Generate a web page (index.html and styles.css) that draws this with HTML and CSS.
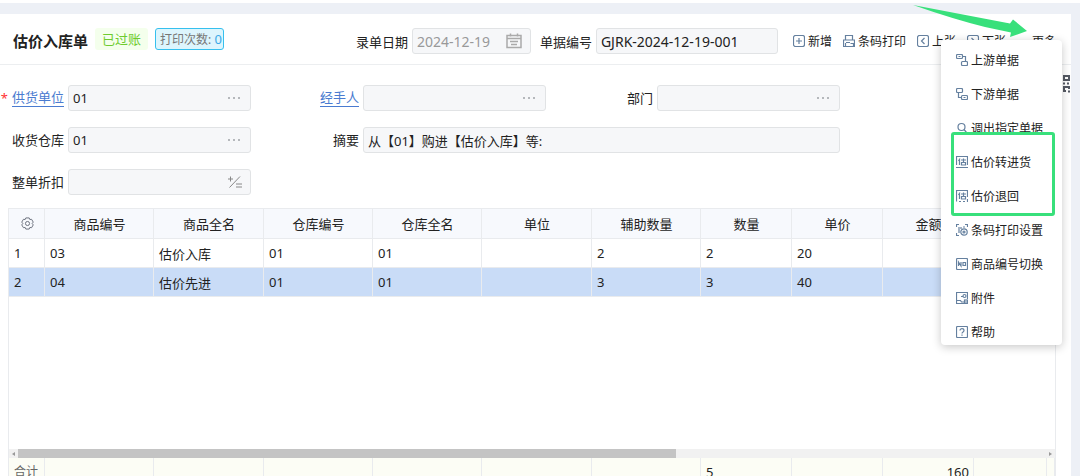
FILE: index.html
```html
<!DOCTYPE html>
<html lang="zh-CN">
<head>
  <meta charset="UTF-8">
  <title>估价入库单</title>
  <link rel="stylesheet" href="styles.css">
</head>
<body>

<div class="page">

  <!-- header -->
  <header class="header">
    <h1>估价入库单</h1>
    <span class="tag-done">已过账</span>
    <span class="tag-print">打印次数: <b>0</b></span>

    <div class="header-field date-field">
      <label for="date">录单日期</label>
      <div class="box">
        <input type="text" id="date" value="2024-12-19">
        <button class="box-btn" aria-label="选择日期">
          <svg width="16" height="16" viewBox="0 0 16 16"><path d="M1 2.500h14v12H1zM1 5.500h14M4.500 .5v3M11.500 .5v3M4 8.500h8M5 11.500h6"/></svg>
        </button>
      </div>
    </div>
    <div class="header-field no-field">
      <label for="number">单据编号</label>
      <div class="box"><input type="text" id="number" value="GJRK-2024-12-19-001"></div>
    </div>

    <div class="tools">
      <button><svg class="icon" viewBox="0 0 12 12"><rect x=".5" y=".5" width="11" height="11" rx="2"/><path d="M6 3v6M3 6h6"/></svg>新增</button>
      <button><svg class="icon" viewBox="0 0 12 12"><path d="M2.500 5V.5h7V5M2.500 11.500h-2V5h11v6.500h-1M3 7.500h4M2.500 8v3.500h8V8.500H7.500"/></svg>条码打印</button>
      <button><svg class="icon" viewBox="0 0 12 12"><rect x=".5" y=".5" width="11" height="11" rx="2"/><path d="M7.500 3 4.500 6l3 3"/></svg>上张</button>
      <button><svg class="icon" viewBox="0 0 12 12"><rect x=".5" y=".5" width="11" height="11" rx="2"/><path d="M4.500 3l3 3-3 3"/></svg>下张</button>
      <button class="more">更多</button>
    </div>
  </header>

  <!-- form -->
  <form class="form">
    <div class="field">
      <span class="required">*</span><label class="link" for="supplier">供货单位</label>
      <div class="box"><input type="text" id="supplier" value="01"><button type="button" class="box-btn dots" aria-label="选择供货单位"><i></i><i></i><i></i></button></div>
    </div>
    <div class="field">
      <label class="link" for="handler">经手人</label>
      <div class="box"><input type="text" id="handler"><button type="button" class="box-btn dots" aria-label="选择经手人"><i></i><i></i><i></i></button></div>
    </div>
    <div class="field">
      <label for="dept">部门</label>
      <div class="box"><input type="text" id="dept"><button type="button" class="box-btn dots" aria-label="选择部门"><i></i><i></i><i></i></button></div>
    </div>
    <div class="field">
      <label for="store">收货仓库</label>
      <div class="box"><input type="text" id="store" value="01"><button type="button" class="box-btn dots" aria-label="选择仓库"><i></i><i></i><i></i></button></div>
    </div>
    <div class="field wide">
      <label for="summary">摘要</label>
      <div class="box"><input type="text" id="summary" value="从【01】购进【估价入库】等:"></div>
    </div>
    <div class="field">
      <label for="discount">整单折扣</label>
      <div class="box"><input type="text" id="discount"><button type="button" class="box-btn calc" aria-label="计算折扣">
        <svg width="14" height="12" viewBox="0 0 14 12"><path d="M0 3h5M2.500 .5v5M1.500 11.500 12 .5M8 8h6M8 11h6"/></svg>
      </button></div>
    </div>
  </form>

  <!-- detail table -->
  <div class="grid">
    <div class="grid-body">
      <table>
        <colgroup><col class="c-no"><col class="c-a"><col class="c-b"><col class="c-a"><col class="c-a"><col class="c-b"><col class="c-a"><col class="c-num"><col class="c-num"><col class="c-num"><col class="c-end"><col></colgroup>
        <thead>
          <tr>
            <th><svg class="gear" viewBox="0 0 14 14"><path d="M5.200 1h3.600l.7 1.700 1.900-.2 1.800 3L12 7l1.200 1.500-1.800 3-1.900-.2L8.800 13H5.200l-.7-1.700-1.900.2-1.800-3L2 7 .8 5.500l1.800-3 1.900.2z"/><circle cx="7" cy="7" r="2.200"/></svg></th>
            <th>商品编号</th><th>商品全名</th><th>仓库编号</th><th>仓库全名</th><th>单位</th><th>辅助数量</th><th>数量</th><th>单价</th><th>金额</th><th></th><th></th>
          </tr>
        </thead>
        <tbody>
          <tr><td>1</td><td>03</td><td>估价入库</td><td>01</td><td>01</td><td></td><td>2</td><td>2</td><td>20</td><td></td><td></td><td></td></tr>
          <tr class="active"><td>2</td><td>04</td><td>估价先进</td><td>01</td><td>01</td><td></td><td>3</td><td>3</td><td>40</td><td></td><td></td><td></td></tr>
        </tbody>
      </table>
    </div>
    <div class="scrollbar"><span class="arrow-left"></span><span class="track"><span class="thumb"></span></span><span class="arrow-right"></span></div>
    <table class="total">
      <colgroup><col class="c-no"><col class="c-a"><col class="c-b"><col class="c-a"><col class="c-a"><col class="c-b"><col class="c-a"><col class="c-num"><col class="c-num"><col class="c-num"><col class="c-end"><col></colgroup>
      <tbody>
        <tr><td class="sum">合计</td><td></td><td></td><td></td><td></td><td></td><td></td><td>5</td><td></td><td class="money">160</td><td></td><td></td></tr>
      </tbody>
    </table>
  </div>

  <button class="side-btn" aria-label="显示设置">
    <svg width="16" height="20" viewBox="0 0 16 20"><path d="M1 2h5v4H1zM10 2h5v4h-5zM1 13h5v4H1zM12 17h-2v-4h5v2M14 17.500h2M9 9.500h2M13 9.500h2M3 9.500h2"/></svg>
  </button>

  <!-- more menu -->
  <div class="menu">
    <button><svg class="icon" viewBox="0 0 12 12"><rect x=".5" y=".5" width="6" height="4" rx="1"/><rect x="5.500" y="7.500" width="6" height="4" rx="1"/><path d="M6.500 2.500h3v5M2.500 2.500h2"/></svg>上游单据</button>
    <button><svg class="icon" viewBox="0 0 12 12"><rect x=".5" y=".5" width="6" height="4" rx="1"/><rect x="5.500" y="7.500" width="6" height="4" rx="1"/><path d="M2.500 4.500v5h3M7.500 9.500h2"/></svg>下游单据</button>
    <button><svg class="icon" viewBox="0 0 12 12"><circle cx="5.500" cy="5" r="3.500"/><path d="M8 7.500l2.500 3"/></svg>调出指定单据</button>
    <button><svg class="icon" viewBox="0 0 12 12"><path d="M.5 9V.5h11V9M0 11.500h12M4 2.500 2.500 5M3.500 4v5M5 4h5M7.500 2.500v4M5.500 6.500h4V9h-4z"/></svg>估价转进货</button>
    <button><svg class="icon" viewBox="0 0 12 12"><path d="M.5 11.500V.5h11V7M4 2.500 2.500 5M3.500 4v5M5 4h5M7.500 2.500v4M5.500 6.500h4V9h-4zM3 11.500h2M7 11.500h2M11.500 9v3"/></svg>估价退回</button>
    <button><svg class="icon" viewBox="0 0 12 12"><path d="M.5 3V.5H3M9 .5h2.500V3M.5 9v2.500H3M3 3v6M5 3v2M7 3h2"/><circle cx="8" cy="8" r="3.200"/><circle cx="8" cy="8" r="1"/></svg>条码打印设置</button>
    <button><svg class="icon" viewBox="0 0 12 12"><rect x=".5" y=".5" width="11" height="11" rx="1"/><path d="M2.500 8V4l2.500 4V4M7 4.500h2.500v3H7z"/></svg>商品编号切换</button>
    <button><svg class="icon" viewBox="0 0 12 12"><path d="M11.500 7V.5H.5v11h8M.5 8.500h4l1 1.500h5.500M5 4.500h2"/><circle cx="8.500" cy="4" r="1.500"/><rect x="8.500" y="8" width="3" height="3.500"/></svg>附件</button>
    <button><svg class="icon" viewBox="0 0 12 12"><rect x=".5" y=".5" width="11" height="11" rx="1"/><path d="M4 4.500C4 2 8 2 8 4.500 8 6 6 5.800 6 7.500M6 8.500v1.200"/></svg>帮助</button>
    <div class="highlight"></div>
  </div>

  <svg class="pointer" width="116" height="34" viewBox="0 0 116 34"><path d="M0 0L97 18.500 100 14.500 114 26 97 32 98 27.500 72 22Q40 14 0 0z"/></svg>

</div>

</body>
</html>
```

FILE: styles.css
```css
* {
  box-sizing: border-box;
}
body {
  margin: 0;
  height: 100vh;
  overflow: hidden;
  background: #edf0f6;
  border-top: 3px solid #fff;
  font-family: "Noto Sans", "Noto Sans CJK SC", sans-serif;
  font-size: 13px;
  color: #222;
}
button, input {
  font: inherit;
  color: inherit;
  border: none;
  background: none;
  padding: 0;
}
svg {
  fill: none;
  stroke: currentColor;
}
.page {
  position: relative;
  display: flex;
  flex-direction: column;
  height: calc(100vh - 4px);
  margin: 11px 9px 0 0;
  background: #fff;
}

/* header */
.header {
  display: flex;
  align-items: center;
  height: 51px;
  padding: 4px 15px 0 13px;
  border-bottom: 1px solid #eceef0;
}
h1 {
  margin: 0 7px 0 0;
  font-size: 15px;
  line-height: 22px;
  font-weight: bold;
}
.tag-done, .tag-print {
  height: 22px;
  line-height: 20px;
  border-radius: 3px;
  margin-bottom: 4px;
}
.tag-done {
  padding: 1px 7px;
  margin-right: 7px;
  background: #f4ffec;
  color: #6ecb2f;
}
.tag-print {
  width: 69px;
  padding-left: 4px;
  border: 1px solid #36c0ee;
  background: #ddf5fd;
  color: #777;
  font-size: 12px;
  white-space: nowrap;
}
.tag-print b {
  font-size: 13px;
  font-weight: normal;
  color: #3ba9e8;
}
.header-field {
  display: flex;
  align-items: center;
  gap: 4px;
}
.date-field {
  margin-left: auto;
  margin-right: 9px;
}
.date-field .box {
  width: 119px;
  color: #999;
}
.no-field .box {
  width: 182px;
}
.header-field input {
  font-size: 14px;
}
.box {
  display: flex;
  align-items: center;
  height: 26px;
  padding-left: 4px;
  border: 1px solid #e1e3e5;
  border-radius: 3px;
  background: #f6f7f9;
}
.box input {
  flex: 1;
  width: 0;
  outline: none;
}
.box-btn {
  display: flex;
  margin-right: 8px;
  color: #aaa;
}
.date-field svg {
  stroke-width: 1.5;
}
.tools {
  display: flex;
  gap: 11px;
  margin-left: 15px;
  font-size: 12px;
}
.tools button, .menu button {
  display: flex;
  align-items: center;
  gap: 3px;
  white-space: nowrap;
}
.tools .more {
  margin-left: 15px;
}
.icon {
  width: 12px;
  height: 12px;
  color: #65809f;
  stroke-width: 1.2;
}

/* form */
.form {
  display: grid;
  grid-template-columns: 251px 295px 294px;
  row-gap: 16px;
  padding: 20px 0 13px;
}
.field {
  display: flex;
  align-items: center;
  justify-content: flex-end;
  gap: 4px;
}
.field .box {
  width: 183px;
}
.field.wide {
  grid-column: span 2;
}
.field.wide .box {
  width: 477px;
}
.field label {
  line-height: 17px;
  white-space: nowrap;
}
.field .link {
  color: #4a7bd0;
  border-bottom: 1px solid #4a7bd0;
}
.required {
  color: #f33;
}
.field .dots {
  gap: 3px;
  margin-right: 10px;
}
.dots i {
  width: 2px;
  height: 2px;
  background: #b5b8bc;
}
.calc {
  color: #888;
}

/* table */
.grid {
  flex: 1;
  display: flex;
  flex-direction: column;
  margin: 0 15px 0 8px;
  border: 1px solid #e9ebee;
  border-width: 1px 1px 0 1px;
}
.grid-body {
  flex: 1;
}
table {
  width: 100%;
  table-layout: fixed;
  border-collapse: separate;
  border-spacing: 0;
}
.c-no {
  width: 36px;
}
.c-a {
  width: 109px;
}
.c-b {
  width: 110px;
}
.c-num {
  width: 91px;
}
.c-end {
  width: 73px;
}
th, td {
  height: 29px;
  padding: 0 4px 0 5px;
  border-right: 1px solid #e9ebee;
  border-bottom: 1px solid #e9ebee;
  text-align: left;
  white-space: nowrap;
}
th {
  height: 30px;
  background: #f7f9fd;
  font-weight: normal;
  text-align: center;
}
.active td {
  background: #c9dcf7;
}
.gear {
  display: block;
  width: 13px;
  height: 13px;
  margin: auto;
  color: #666b78;
}
.scrollbar {
  display: flex;
  align-items: center;
  justify-content: space-between;
  height: 9px;
  padding: 0 3px;
  background: #f1f1f1;
}
.track {
  flex: 1;
  height: 9px;
  margin: 0 3px;
}
.thumb {
  display: block;
  width: 64%;
  height: 9px;
  background: #c4c4c4;
}
.arrow-left, .arrow-right {
  border: 2px solid transparent;
}
.arrow-left {
  border-right: 3px solid #999;
  border-left: none;
}
.arrow-right {
  border-left: 3px solid #999;
  border-right: none;
}
.total td {
  height: 28px;
  line-height: 16px;
  background: #fcfdf5;
}
.total .sum {
  font-size: 12px;
  color: #666;
}
.total .money {
  text-align: right;
}

/* side button, behind the menu */
.side-btn {
  position: absolute;
  top: 60px;
  right: 1px;
  color: #555a64;
}
.side-btn svg {
  display: block;
  stroke-width: 2;
}

/* more menu */
.menu {
  position: absolute;
  top: 26px;
  right: 9px;
  display: flex;
  flex-direction: column;
  gap: 12px;
  width: 121px;
  padding: 9px 15px 2px;
  border-radius: 4px;
  background: #fff;
  box-shadow: 0 2px 10px rgba(0, 0, 0, 0.22);
  font-size: 12px;
}
.menu button {
  height: 22px;
}
.highlight {
  position: absolute;
  top: 92px;
  left: 10px;
  right: 7px;
  height: 84px;
  border: 3px solid #38e07b;
  border-radius: 3px;
}
.pointer {
  position: absolute;
  top: -9px;
  right: 42px;
  fill: #38e07b;
  stroke: none;
}
```
